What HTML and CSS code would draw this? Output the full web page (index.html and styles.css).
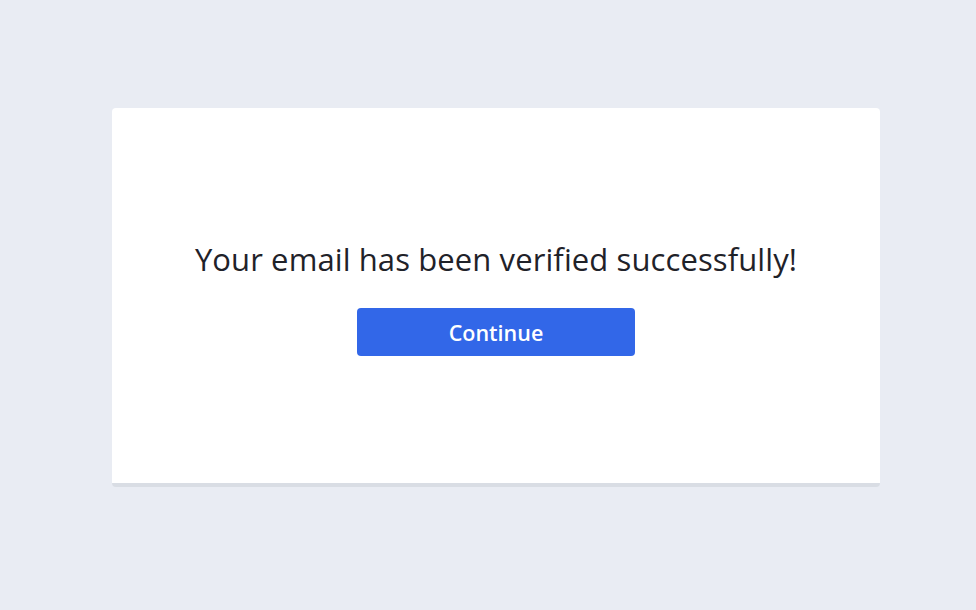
FILE: index.html
```html
<!DOCTYPE html>
<html lang="en">
<head>
<meta charset="utf-8">
<title>Email verified</title>
<link rel="stylesheet" href="styles.css">
</head>
<body>
<main class="page">
  <section class="card">
    <h1 class="title">Your email has been verified successfully!</h1>
    <button class="btn" type="button">Continue</button>
  </section>
</main>
</body>
</html>
```
FILE: styles.css
```css
html, body {
  margin: 0;
  padding: 0;
  background: #e9ecf3;
  font-family: "Open Sans", "Noto Sans", sans-serif;
}
.page {
  display: flex;
  justify-content: center;
  padding: 108px 0 0 16px;
}
.card {
  box-sizing: border-box;
  width: 768px;
  height: 379px;
  background: #ffffff;
  border-radius: 4px;
  border-bottom: 4px solid #d9dde4;
  display: flex;
  flex-direction: column;
  align-items: center;
  padding-top: 130px;
}
.title {
  margin: 0;
  font-size: 31px;
  font-weight: 400;
  line-height: 42px;
  color: #1f2229;
  letter-spacing: 0.1px;
}
.btn {
  margin-top: 28px;
  width: 278px;
  height: 48px;
  border: none;
  border-radius: 4px;
  background: #3267e8;
  color: #ffffff;
  font-family: "Open Sans", "Noto Sans", sans-serif;
  font-size: 21.5px;
  font-weight: 600;
  cursor: pointer;
}
```
